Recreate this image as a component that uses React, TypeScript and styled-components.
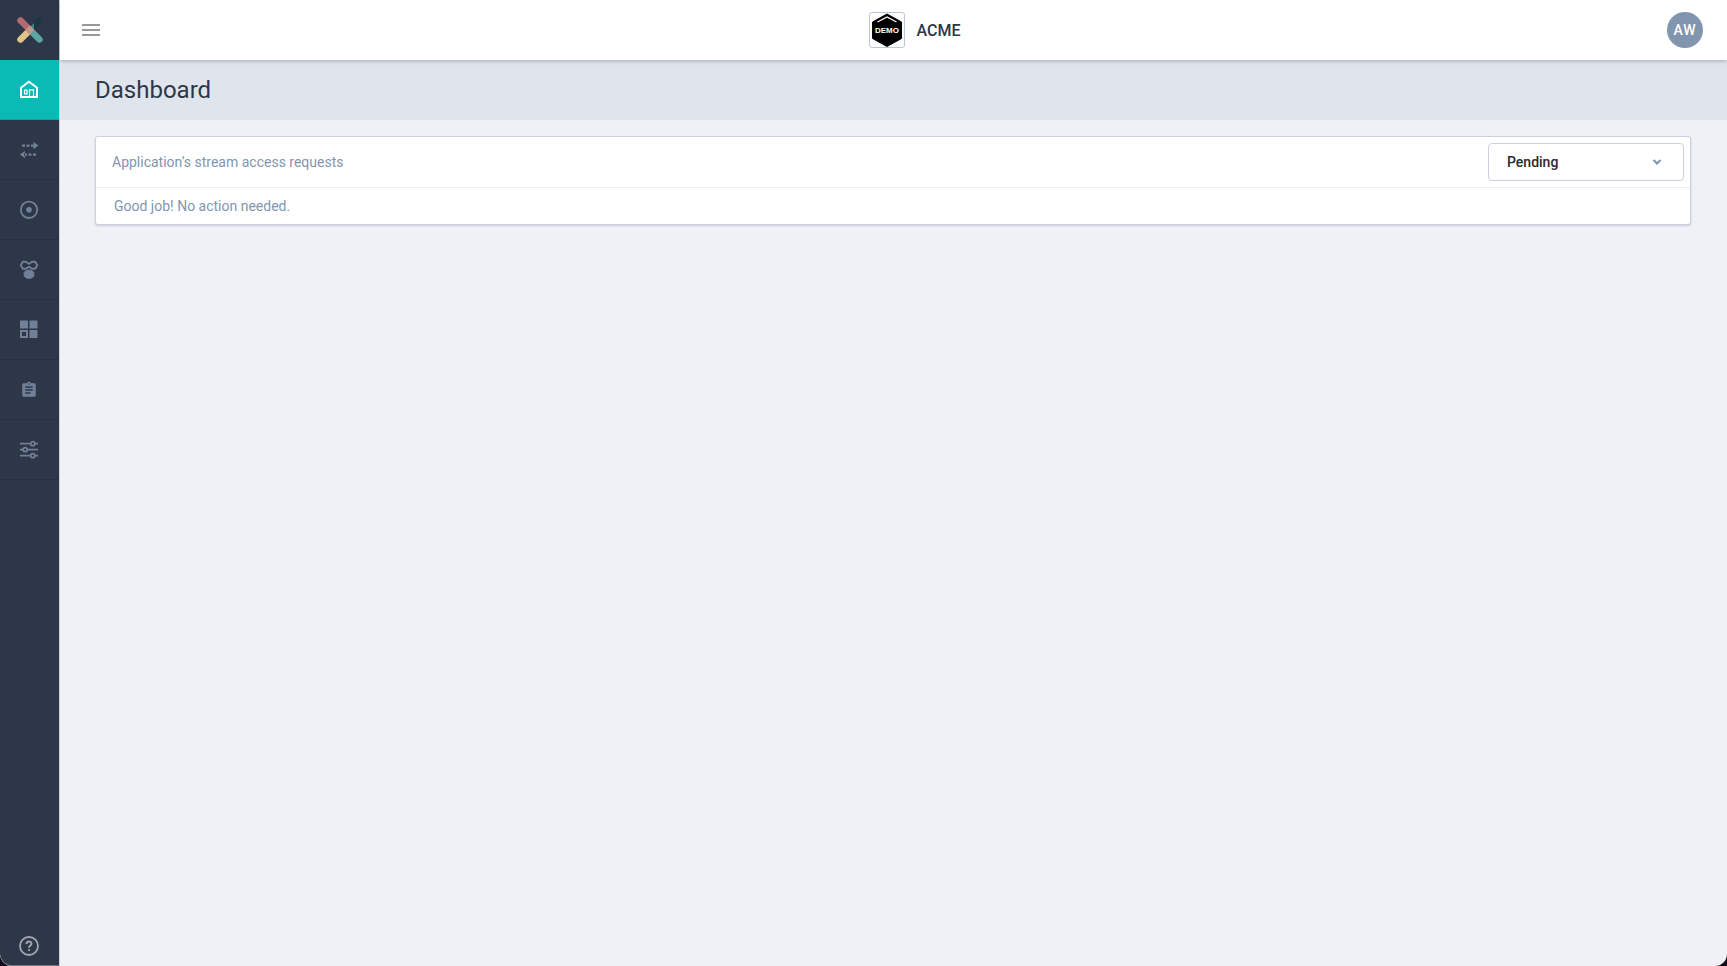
import React from 'react';
import styled, { createGlobalStyle } from 'styled-components';

const GlobalStyle = createGlobalStyle`
  *, *::before, *::after { box-sizing: border-box; }
  body {
    margin: 0;
    background: #12081a;
    font-family: Roboto, "Liberation Sans", sans-serif;
    color: #2d3748;
  }
`;

const Shell = styled.div`
  display: flex;
  min-height: 100vh;
  background: #f0f1f7;
  border-radius: 0 0 12px 12px;
  overflow: hidden;
`;

const Sidebar = styled.aside`
  display: flex;
  flex-direction: column;
  flex: none;
  width: 60px;
  background: #2d3748;
  border-right: 1px solid #cdd3dd;
  border-bottom: 1px solid #6f7783;
  border-bottom-left-radius: 12px;
`;

const LogoLink = styled.a`
  display: flex;
  align-items: center;
  justify-content: center;
  height: 60px;
`;

const Nav = styled.nav`
  display: flex;
  flex-direction: column;
  flex: 1;
`;

const NavLink = styled.a<{ $active?: boolean }>`
  display: flex;
  align-items: center;
  justify-content: center;
  height: 60px;
  padding-right: 1px;
  color: ${(p) => (p.$active ? '#ffffff' : '#718096')};
  background: ${(p) => (p.$active ? '#0abab5' : 'transparent')};
  border-bottom: 1px solid ${(p) => (p.$active ? '#0fa5a3' : '#273040')};
`;

const HelpLink = styled.a`
  display: flex;
  justify-content: center;
  padding: 0 1px 9px 0;
  color: #a0a6b1;
`;

const Content = styled.div`
  display: flex;
  flex-direction: column;
  flex: 1;
  min-width: 0;
`;

const TopBar = styled.header`
  position: relative;
  display: grid;
  grid-template-columns: 1fr auto 1fr;
  align-items: center;
  height: 60px;
  padding: 0 24px 0 22px;
  background: #ffffff;
  box-shadow: 0 1px 4px rgba(0, 0, 0, 0.25);
`;

const MenuButton = styled.button`
  display: flex;
  justify-self: start;
  padding: 0;
  border: 0;
  background: none;
  color: #999999;
  cursor: pointer;
`;

const Brand = styled.div`
  display: flex;
  align-items: center;
  gap: 12px;
  padding-left: 44px;
  font-size: 16px;
  font-weight: 500;
`;

const BrandFrame = styled.span`
  display: flex;
  align-items: center;
  justify-content: center;
  width: 36px;
  height: 36px;
  border: 1px solid #bcc6d6;
  border-radius: 3px;
`;

const Avatar = styled.button`
  justify-self: end;
  width: 36px;
  height: 36px;
  padding: 0;
  border: 0;
  border-radius: 50%;
  background: #8295af;
  color: #ffffff;
  font: 500 14px/36px Roboto, "Liberation Sans", sans-serif;
  letter-spacing: 1px;
  cursor: pointer;
`;

const TitleBar = styled.div`
  display: flex;
  align-items: center;
  height: 60px;
  padding: 0 35px;
  background: #e0e4ec;
`;

const Title = styled.h1`
  margin: 0;
  font-size: 24px;
  line-height: 32px;
  font-weight: 400;
`;

const Main = styled.main`
  padding: 16px 36px 16px 35px;
`;

const Card = styled.section`
  background: #ffffff;
  border: 1px solid #cbd2de;
  border-radius: 3px;
  box-shadow: 0 1px 2px rgba(45, 55, 72, 0.2);
  font-size: 14px;
  line-height: 20px;
  color: #8296b0;
`;

const CardHeader = styled.div`
  display: flex;
  align-items: center;
  justify-content: space-between;
  padding: 6px 6px 6px 16px;
  border-bottom: 1px solid #e9ecf1;
`;

const CardTitle = styled.label`
  font-size: 14px;
`;

const CardBody = styled.p`
  margin: 0;
  padding: 8px 18px;
`;

const SelectBox = styled.div`
  display: grid;
  align-items: center;
  width: 196px;

  & > * { grid-area: 1 / 1; }
  & > svg {
    justify-self: end;
    margin-right: 22px;
    pointer-events: none;
  }
`;

const Select = styled.select`
  appearance: none;
  width: 100%;
  height: 38px;
  padding: 0 40px 0 18px;
  border: 1px solid #cbd2de;
  border-radius: 4px;
  background: #ffffff;
  color: #2a2a2a;
  font: 500 14px/20px Roboto, "Liberation Sans", sans-serif;
`;

const Logo = () => (
  <svg width="28" height="28" viewBox="0 0 28 28" fill="none" strokeWidth="6.500" strokeLinecap="round">
    <path d="M4.500 23.500 14 14" stroke="#e2c48a" />
    <path d="M14 14 23.500 4.500" stroke="#1f3744" />
    <path d="M14 14 23.500 23.500" stroke="#5ba5a5" />
    <path d="M14.500 10.500 18 7v8l-3 3z" fill="#428487" />
    <path d="M4.500 4.500 12.500 12.500" stroke="#b36a70" />
    <path d="m14 9.500 4.500 4.500-4.500 4.500L9.500 14z" fill="#bd9a8d" />
  </svg>
);

const HomeIcon = () => (
  <svg width="20" height="20" viewBox="0 0 20 20" fill="none" stroke="currentColor">
    <path d="M2 17V7.800L10 1.800l8 6V17z" strokeWidth="2" />
    <path d="M10.500 17v-7.200h4V17M5.500 10.200h2.500v3.600H5.500z" strokeWidth="1.200" />
  </svg>
);

const StreamsIcon = () => (
  <svg width="20" height="20" viewBox="0 0 20 20" fill="currentColor">
    <path d="M3 4.500h3v2.200H3zM7.500 4.500h3v2.200h-3zM12 4.500h3v2.200h-3zM14.500 2 19.500 5.600l-5 3.600zM14 13.500h3v2.200h-3zM9.500 13.500h3v2.200h-3zM5 13.500h3v2.200H5zM6 11 1 14.600l5 3.600z" />
  </svg>
);

const TargetIcon = () => (
  <svg width="20" height="20" viewBox="0 0 20 20" fill="none">
    <circle cx="10" cy="9.800" r="8.200" stroke="currentColor" strokeWidth="1.800" />
    <circle cx="10" cy="9.800" r="2.800" fill="currentColor" />
  </svg>
);

const HiveIcon = () => (
  <svg width="20" height="20" viewBox="0 0 20 20" fill="none" stroke="currentColor">
    <path
      d="M3.800 1.700h3L10 3.800l3.200-2.100h3L18.200 5.200l-2 3.500h-3L10 6.800 6.800 8.700h-3l-2-3.500z"
      strokeWidth="1.900"
      strokeLinejoin="round"
    />
    <path d="M8 10.200h4l2.800 2v4L12 18.200H8l-2.800-2v-4z" fill="currentColor" strokeLinejoin="round" />
  </svg>
);

const GridIcon = () => (
  <svg width="20" height="20" viewBox="0 0 20 20" fill="currentColor">
    <rect x="1" y="0.500" width="8" height="8" rx=".6" />
    <rect x="10.500" y="0.500" width="8" height="8" rx=".6" />
    <rect x="10.500" y="10" width="8" height="8" rx=".6" />
    <path fillRule="evenodd" d="M1 10h8v8H1zM3 12v4h4v-4z" />
  </svg>
);

const ClipboardIcon = () => (
  <svg width="18" height="18" viewBox="0 0 24 24" fill="currentColor">
    <path d="M19 3h-4.180C14.400 1.840 13.300 1 12 1s-2.400.84-2.820 2H5c-1.100 0-2 .9-2 2v14c0 1.100.9 2 2 2h14c1.100 0 2-.9 2-2V5c0-1.100-.9-2-2-2zm-7 0c.55 0 1 .45 1 1s-.45 1-1 1-1-.45-1-1 .45-1 1-1zm2 14H7v-2h7v2zm3-4H7v-2h10v2zm0-4H7V7h10v2z" />
  </svg>
);

const SlidersIcon = () => (
  <svg width="20" height="20" viewBox="0 0 20 20" fill="none" stroke="currentColor" strokeWidth="1.700">
    <path d="M1 3.700h10.500M16 3.700h3M1 9.700h3M8.500 9.700H19M1 15.700h10.500M16 15.700h3" />
    <circle cx="13.800" cy="3.700" r="2" />
    <circle cx="6.200" cy="9.700" r="2" />
    <circle cx="13.800" cy="15.700" r="2" />
  </svg>
);

const HelpIcon = () => (
  <svg width="20" height="20" viewBox="0 0 20 20" fill="none" stroke="currentColor">
    <circle cx="10" cy="10" r="9" strokeWidth="1.800" />
    <path d="M7.500 8c0-3.300 5-3.200 5-.3 0 1.800-2.500 1.900-2.500 4" strokeWidth="1.900" />
    <path d="M10 13.200V15" strokeWidth="2" />
  </svg>
);

const MenuIcon = () => (
  <svg width="18" height="12" viewBox="0 0 18 12" fill="currentColor">
    <path d="M0 0h18v2H0zM0 5h18v2H0zM0 10h18v2H0z" />
  </svg>
);

const DemoMark = () => (
  <svg width="34" height="34" viewBox="0 0 34 34" role="img" aria-label="Demo">
    <path d="M17 1 31.500 9v16.500L17 33.500 2.500 25.500V9z" fill="#000000" stroke="#000000" strokeLinejoin="round" />
    <path d="M7.500 9 17 4l9.500 5" fill="none" stroke="#ffffff" strokeWidth="1.200" />
    <text
      x="17"
      y="20"
      textAnchor="middle"
      fill="#ffffff"
      fontFamily='"Liberation Sans", sans-serif'
      fontSize="8"
      fontWeight="700"
    >
      DEMO
    </text>
  </svg>
);

const ChevronIcon = () => (
  <svg width="10" height="8" viewBox="0 0 10 8" fill="none">
    <path d="m1.500 2 3.500 3.500L8.500 2" stroke="#8296b0" strokeWidth="2.200" />
  </svg>
);

const navItems = [
  { label: 'Dashboard', Icon: HomeIcon, active: true },
  { label: 'Streams', Icon: StreamsIcon },
  { label: 'Topics', Icon: TargetIcon },
  { label: 'Groups', Icon: HiveIcon },
  { label: 'Applications', Icon: GridIcon },
  { label: 'Schemas', Icon: ClipboardIcon },
  { label: 'Settings', Icon: SlidersIcon },
];

export default function App() {
  return (
    <>
      <GlobalStyle />
      <Shell>
        <Sidebar>
          <LogoLink href="#" aria-label="Home">
            <Logo />
          </LogoLink>
          <Nav>
            {navItems.map(({ label, Icon, active }) => (
              <NavLink key={label} href="#" aria-label={label} $active={active}>
                <Icon />
              </NavLink>
            ))}
          </Nav>
          <HelpLink href="#" aria-label="Help">
            <HelpIcon />
          </HelpLink>
        </Sidebar>
        <Content>
          <TopBar>
            <MenuButton type="button" aria-label="Toggle menu">
              <MenuIcon />
            </MenuButton>
            <Brand>
              <BrandFrame>
                <DemoMark />
              </BrandFrame>
              ACME
            </Brand>
            <Avatar type="button">AW</Avatar>
          </TopBar>
          <TitleBar>
            <Title>Dashboard</Title>
          </TitleBar>
          <Main>
            <Card>
              <CardHeader>
                <CardTitle htmlFor="request-status">Application’s stream access requests</CardTitle>
                <SelectBox>
                  <Select id="request-status" defaultValue="Pending">
                    <option>Pending</option>
                    <option>Approved</option>
                    <option>Rejected</option>
                  </Select>
                  <ChevronIcon />
                </SelectBox>
              </CardHeader>
              <CardBody>Good job! No action needed.</CardBody>
            </Card>
          </Main>
        </Content>
      </Shell>
    </>
  );
}
